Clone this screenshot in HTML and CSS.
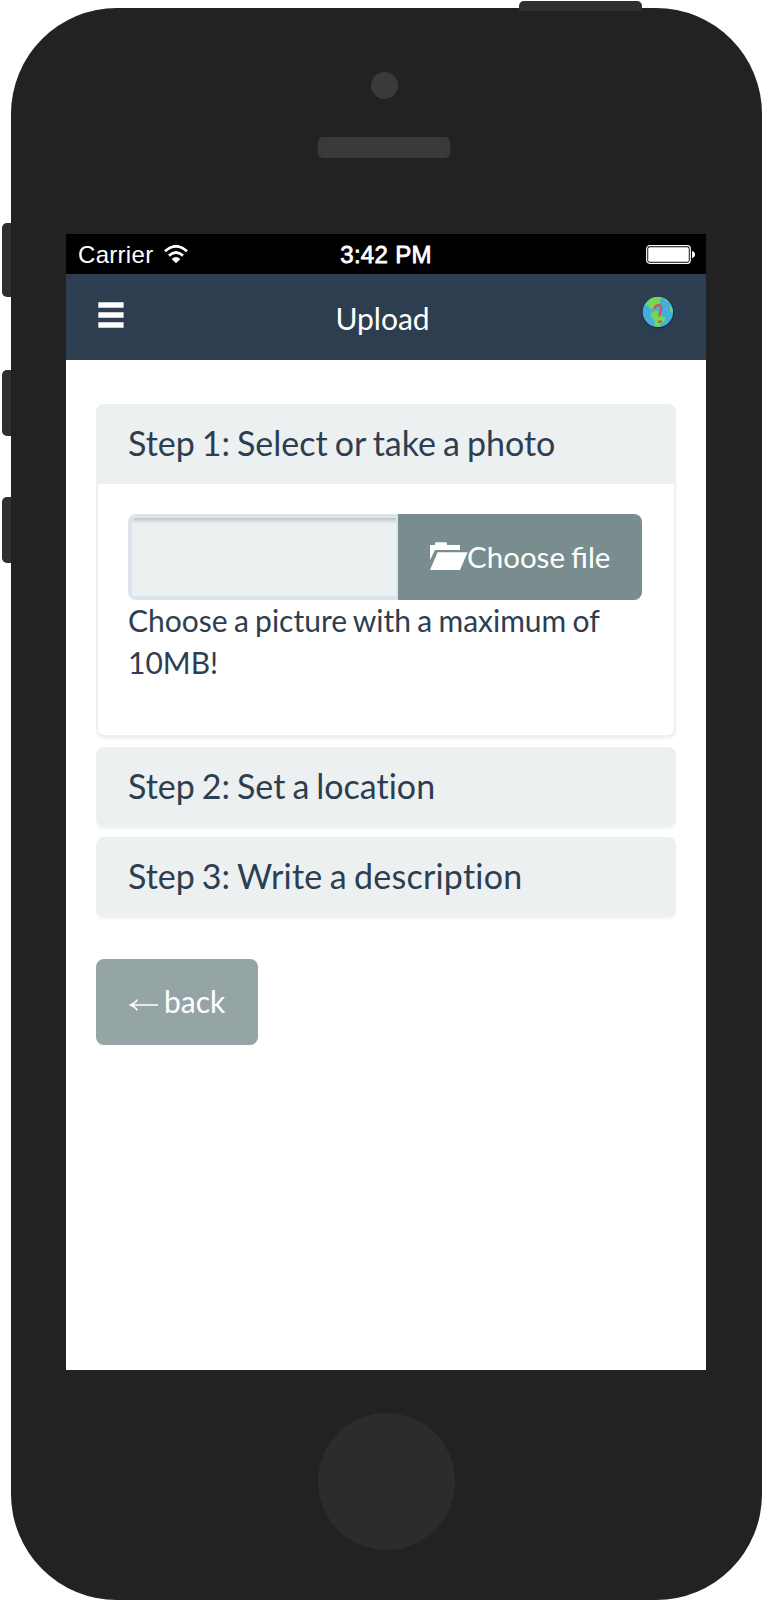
FILE: index.html
```html
<!DOCTYPE html>
<html lang="en">
<head>
<meta charset="utf-8">
<title>Upload</title>
<link rel="stylesheet" href="styles.css">
</head>
<body>
<div class="device">
  <span class="key key-power"></span>
  <span class="key key-mute"></span>
  <span class="key key-up"></span>
  <span class="key key-down"></span>
  <div class="shell">
    <div class="forehead">
      <span class="camera"></span>
      <span class="speaker"></span>
    </div>
    <div class="screen">
      <div class="status">
        <div class="carrier">
          <span>Carrier</span>
          <svg class="wifi" width="24" height="19" viewBox="0 0 24 19">
            <path d="M1 6.2Q12 -3.6 23 6.2" fill="none" stroke="#fff" stroke-width="2.8"/>
            <path d="M5 10.6Q12 4.4 19 10.6" fill="none" stroke="#fff" stroke-width="2.8"/>
            <path d="M7.6 13.9Q12 10.2 16.4 13.9L12 18.2Z" fill="#fff"/>
          </svg>
        </div>
        <span class="time">3:42 PM</span>
        <svg class="battery" width="50" height="20" viewBox="0 0 50 20">
          <rect x="0.7" y="0.7" width="43.6" height="17.6" rx="3" fill="none" stroke="#fff" stroke-width="1.2"/>
          <rect x="2.2" y="2.2" width="40.6" height="14.6" rx="1.6" fill="#fff"/>
          <path d="M46 6q3 .6 3 3.5t-3 3.5z" fill="#fff"/>
        </svg>
      </div>
      <header class="navbar">
        <svg class="menu" width="26" height="26" viewBox="0 0 26 26">
          <path d="M0.3 .2h25.3v5.5H.3zM.3 10.2h25.3v5.5H.3zM.3 20.2h25.3v5.5H.3z" fill="#fff"/>
        </svg>
        <h1 class="title">Upload</h1>
        <svg class="globe" width="34" height="34" viewBox="0 0 34 34">
          <circle cx="17" cy="17.4" r="16" fill="#1d2c35"/>
          <circle cx="16.9" cy="16.9" r="15.2" fill="#42b0dc"/>
          <path d="M4.5 9Q9 1.8 17 2q3 0 4 .7l-2.2 2.4.6 3-4 1.6.4 2.6-3 .4-.5 2.2-3.3-1.8-1.8-2.6-3.7.1z" fill="#78d655"/>
          <path d="M11 17.2l4-1.6 4 1.8.8 3.4 4.8 1.6-1.1 4-3.7 2.4-1 2.7-3.4.2-2.2-2.4.5-4-4.6-4z" fill="#78d655"/>
          <path d="M22.7 3.3l4 2.1 1.4 1.7-3.5-1.4zM29.3 11l1.8 2.3.6 3.9-2.8-.6z" fill="#78d655"/>
          <path d="M13.4 14.1C13.2 9.6 19 8.9 20.4 12c1.2 3-4 6.8-1.4 9.2" fill="none" stroke="#dc4e4c" stroke-width="2"/>
          <path d="M17 25.9l3.4-.8.3 2.5-3.3.5z" fill="#dc4543"/>
        </svg>
      </header>
      <main class="content">
        <section class="panel">
          <h2 class="panel-heading is-open">Step 1: Select or take a photo</h2>
          <div class="panel-body">
            <div class="file-row">
              <div class="file-name"></div>
              <div class="file-button">
                <svg width="38" height="28" viewBox="0 0 38 28" fill="#fff">
                  <path d="M0 18V3h5V1.6Q5 .3 6.5 .3h9Q17 .3 17 1.6V3h13v5H5z"/>
                  <path d="M7.6 10.2h30L30 28H0z"/>
                </svg><span>Choose file</span>
              </div>
            </div>
            <p class="help">Choose a picture with a maximum of 10MB!</p>
          </div>
        </section>
        <section class="panel"><h2 class="panel-heading">Step 2: Set a location</h2></section>
        <section class="panel"><h2 class="panel-heading">Step 3: <span class="loose">Write a description</span></h2></section>
        <div class="back">
          <svg width="30" height="12" viewBox="0 0 30 12" fill="none" stroke="#fff" stroke-width="1.5">
            <path d="M2 6h27M8.4 .6Q6 4.6 1.4 6Q6 7.400 8.400 11.400"/>
          </svg><span>back</span>
        </div>
      </main>
    </div>
    <div class="chin"><span class="home"></span></div>
  </div>
</div>
</body>
</html>
```
FILE: styles.css
```css
* { box-sizing: border-box; }

body {
  margin: 0;
  background: #fff;
  color: #2c3e50;
  font-family: Lato, sans-serif;
  font-size: 30px;
}

h1, h2, p { margin: 0; font-weight: 400; }
svg { display: block; flex: none; }

.device {
  position: relative;
  width: 763px;
  height: 1601px;
  padding: 8px 1px 1px 10.5px;
  overflow: hidden;
}

.shell {
  height: 100%;
  padding: 0 55.5px;
  border-radius: 106px;
  background: #222;
}

.key { position: absolute; background: #2f2f2f; }
.key-power { left: 519px; top: 1px; width: 123px; height: 9.5px; border-radius: 5px 5px 0 0; }
.key-mute, .key-up, .key-down { left: 2px; width: 9px; border-radius: 5px 0 0 5px; }
.key-mute { top: 222.5px; height: 74px; }
.key-up { top: 369.5px; height: 66px; }
.key-down { top: 497px; height: 66px; }

.forehead {
  display: flex;
  flex-direction: column;
  align-items: center;
  height: 226px;
  padding: 64px 4px 0 0;
}
.camera { width: 27px; height: 27px; border-radius: 50%; background: #3a3a3a; }
.speaker { width: 132px; height: 21px; margin-top: 38px; border-radius: 5px; background: #3a3a3a; }

.screen { width: 640px; height: 1136px; background: #fff; }

.status {
  display: grid;
  grid-template-columns: 1fr auto 1fr;
  align-items: center;
  height: 40px;
  padding: 0 10px 0 12px;
  background: #000;
  color: #fff;
  font: 24px/40px "Liberation Sans", Arial, sans-serif;
}
.carrier { display: flex; align-items: center; gap: 11px; padding-top: 1px; letter-spacing: .3px; }
.carrier svg { margin-top: -2px; }
.time { padding: 1px 2px 0 0; letter-spacing: .3px; -webkit-text-stroke: .8px #fff; }
.battery { justify-self: end; margin-top: 1px; }

.navbar {
  display: grid;
  grid-template-columns: 1fr auto 1fr;
  height: 86px;
  padding: 0 31px 0 32px;
  background: #2c3e50;
  color: #fff;
}
.menu { margin-top: 28px; }
.title { margin: 24px 8px 0 0; font-size: 30px; line-height: 40px; }
.globe { justify-self: end; margin-top: 21px; }

.content {
  display: flex;
  flex-direction: column;
  gap: 10px;
  padding: 44px 30px 0;
}
.panel {
  border: 2px solid #ecf0f1;
  border-radius: 8px;
  box-shadow: 0 2px 2px rgba(0, 0, 0, .05);
}
.panel-heading {
  height: 76px;
  padding: 0 30px;
  background: #ecf0f1;
  font-size: 34px;
  line-height: 74px;
  word-spacing: -1.7px;
  font-variant-ligatures: none;
}
.panel-heading.is-open { height: 78px; }
.loose { letter-spacing: .22px; }
.panel-body { height: 251px; padding: 30px 30px 0; }
.file-row { display: flex; height: 86px; }
.file-name {
  width: 270px;
  border: 4px solid #dce4ec;
  border-right-width: 2px;
  border-radius: 8px 0 0 8px;
  background: linear-gradient(#bfc2c3, #d8dcdd 3px, #ecf0f1 6px) padding-box;
}
.file-button {
  display: flex;
  align-items: center;
  width: 244px;
  padding-left: 32px;
  border-radius: 0 8px 8px 0;
  background: #798d8f;
  color: #fff;
}
.file-button svg { margin: -3px -1px 0 0; }
.file-button span { margin-top: -2px; font-size: 29.5px; word-spacing: -1.5px; }
.help { margin-top: -1px; line-height: 42px; word-spacing: -1.4px; }

.back {
  display: flex;
  align-items: center;
  gap: 5px;
  width: 162px;
  height: 86px;
  margin-top: 32px;
  padding-left: 33px;
  border-radius: 8px;
  background: #95a5a6;
  color: #fff;
}
.back svg { margin-top: 6px; }
.back span { margin-top: -2px; }

.chin { display: flex; justify-content: center; padding-top: 43px; }
.home { width: 137px; height: 137px; border-radius: 50%; background: #2c2c2c; }
```
